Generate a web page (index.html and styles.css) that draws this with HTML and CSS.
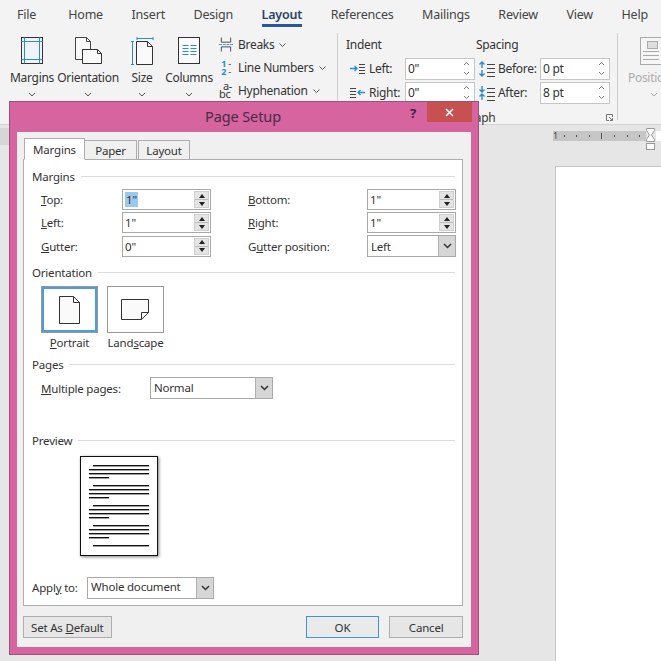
FILE: index.html

```html
<!DOCTYPE html>
<html lang="en">
<head>
    <meta charset="UTF-8">
    <title>Page Setup</title>
    <link rel="stylesheet" href="styles.css">
</head>
<body>
    <div class="tabs">
        <span class="tab-file">File</span>
        <span>Home</span>
        <span>Insert</span>
        <span>Design</span>
        <span class="tab-on">Layout</span>
        <span>References</span>
        <span>Mailings</span>
        <span>Review</span>
        <span>View</span>
        <span>Help</span>
    </div>

    <div class="ribbon">
        <div class="group-setup">
            <div class="big big-margins">
                <svg width="24" height="29" viewBox="0 0 24 29"><rect x="1.5" y="1.5" width="21" height="26" fill="#eef4fa" stroke="#333"/><path d="M4.5 1.5v26M19.5 1.5v26M1.5 5.5h21M1.5 23.5h21" stroke="#2e8bc9" fill="none"/></svg>
                <span>Margins</span>
                <svg class="chev" width="8" height="5" viewBox="0 0 8 5"><path d="M1 1l3 3 3-3" fill="none" stroke="#555"/></svg>
            </div>
            <div class="big big-orient">
                <svg width="30" height="29" viewBox="0 0 30 29"><path d="M2.5 1.5h11l4 4v8h-8v10h-7z" fill="#fafafa" stroke="#444"/><path d="M13.5 1.5v4h4" fill="none" stroke="#444"/><path d="M9.5 13.5h15l4 4v10h-19z" fill="#fafafa" stroke="#333"/><path d="M24.5 13.5v4h4" fill="none" stroke="#333"/></svg>
                <span>Orientation</span>
                <svg class="chev" width="8" height="5" viewBox="0 0 8 5"><path d="M1 1l3 3 3-3" fill="none" stroke="#555"/></svg>
            </div>
            <div class="big big-size">
                <svg width="24" height="29" viewBox="0 0 24 29"><path d="M6.5 5.5h11l5 5v18h-16z" fill="#fafafa" stroke="#333"/><path d="M17.5 5.5v5h5" fill="none" stroke="#333"/><path d="M7 2.500h16M7 1v3M23 1v3M2.500 5v24M1 5.500h3M1 28.500h3" fill="none" stroke="#2e8bc9"/></svg>
                <span>Size</span>
                <svg class="chev" width="8" height="5" viewBox="0 0 8 5"><path d="M1 1l3 3 3-3" fill="none" stroke="#555"/></svg>
            </div>
            <div class="big big-cols">
                <svg width="23" height="29" viewBox="0 0 23 29"><rect x="0.500" y="1.500" width="21" height="26" fill="#fafafa" stroke="#333"/><path d="M4.500 9.500h6M12.500 9.500h6M4.500 12.500h6M12.500 12.500h6M4.500 15.500h6M12.500 15.500h6M4.500 18.500h6M12.500 18.500h6" stroke="#2e8bc9" fill="none"/></svg>
                <span>Columns</span>
                <svg class="chev" width="8" height="5" viewBox="0 0 8 5"><path d="M1 1l3 3 3-3" fill="none" stroke="#555"/></svg>
            </div>
            <div class="small-list">
                <div class="small">
                    <svg width="15" height="16" viewBox="0 0 15 16"><path d="M2.500 0v5h10V0M2.500 15v-5h10v5" fill="none" stroke="#444"/><path d="M0 7.500h15" stroke="#2e8bc9" stroke-dasharray="3 1"/></svg>
                    <span>Breaks</span>
                    <svg width="7" height="4" viewBox="0 0 7 4"><path d="M.5.500l3 3 3-3" fill="none" stroke="#555"/></svg>
                </div>
                <div class="small">
                    <span class="line-nums"><b>1</b> -<br><b>2</b> -</span>
                    <span>Line Numbers</span>
                    <svg width="7" height="4" viewBox="0 0 7 4"><path d="M.5.500l3 3 3-3" fill="none" stroke="#555"/></svg>
                </div>
                <div class="small">
                    <span class="hyph">a-<br>bc</span>
                    <span>Hyphenation</span>
                    <svg width="7" height="4" viewBox="0 0 7 4"><path d="M.5.500l3 3 3-3" fill="none" stroke="#555"/></svg>
                </div>
            </div>
        </div>

        <div class="group-para">
            <div class="para-col para-indent">
                <div class="para-head">Indent</div>
                <div class="para-row">
                    <svg width="15" height="12" viewBox="0 0 15 12"><path d="M9 1.500h6M9 4.500h6M9 7.500h6M9 10.500h6" stroke="#444" fill="none"/><path d="M0 5.500h7M4.500 3l2.500 2.500-2.500 2.500" stroke="#2e8bc9" stroke-width="1.400" fill="none"/></svg>
                    <span class="para-label">Left:</span>
                    <div class="r-input">0"<span class="r-spin"><svg width="7" height="15" viewBox="0 0 7 15"><path d="M1 4l2.500-2.500L6 4M1 11l2.500 2.500L6 11" fill="none" stroke="#777"/></svg></span></div>
                </div>
                <div class="para-row">
                    <svg width="15" height="12" viewBox="0 0 15 12"><path d="M0 1.500h6M0 4.500h6M0 7.500h6M0 10.500h6" stroke="#444" fill="none"/><path d="M15 5.500H8M10.500 3L8 5.500 10.500 8" stroke="#2e8bc9" stroke-width="1.400" fill="none"/></svg>
                    <span class="para-label">Right:</span>
                    <div class="r-input">0"<span class="r-spin"><svg width="7" height="15" viewBox="0 0 7 15"><path d="M1 4l2.500-2.500L6 4M1 11l2.500 2.500L6 11" fill="none" stroke="#777"/></svg></span></div>
                </div>
            </div>
            <div class="para-col">
                <div class="para-head">Spacing</div>
                <div class="para-row para-row-sp">
                    <svg width="17" height="16" viewBox="0 0 17 16"><path d="M4 1v6M1.500 3.500L4 1l2.500 2.500M4 9v6M1.500 12.500L4 15l2.500-2.500" stroke="#2e8bc9" stroke-width="1.400" fill="none"/><path d="M9 3.500h8M9 7.500h8M9 11.500h8M9 15.500h8" stroke="#444" fill="none"/></svg>
                    <span class="para-label">Before:</span>
                    <div class="r-input">0 pt<span class="r-spin"><svg width="7" height="15" viewBox="0 0 7 15"><path d="M1 4l2.500-2.500L6 4M1 11l2.500 2.500L6 11" fill="none" stroke="#777"/></svg></span></div>
                </div>
                <div class="para-row para-row-sp">
                    <svg width="17" height="16" viewBox="0 0 17 16"><path d="M4 1v6M1.500 4.500L4 7l2.500-2.500M4 9v6M1.500 11.500L4 9l2.500 2.500" stroke="#2e8bc9" stroke-width="1.400" fill="none"/><path d="M9 3.500h8M9 7.500h8M9 11.500h8M9 15.500h8" stroke="#444" fill="none"/></svg>
                    <span class="para-label">After:</span>
                    <div class="r-input">8 pt<span class="r-spin"><svg width="7" height="15" viewBox="0 0 7 15"><path d="M1 4l2.500-2.500L6 4M1 11l2.500 2.500L6 11" fill="none" stroke="#777"/></svg></span></div>
                </div>
            </div>
            <div class="para-foot">
                <span>Paragraph</span>
                <svg width="7" height="7" viewBox="0 0 7 7"><path d="M6.500 3V.500H.500v6H3M3 3l3.500 3.500M6.500 4v2.500H4" fill="none" stroke="#777"/></svg>
            </div>
        </div>

        <div class="group-arrange">
            <svg width="22" height="28" viewBox="0 0 22 28"><rect x="0.500" y="0.500" width="21" height="27" fill="#f6f6f6" stroke="#aaa"/><rect x="7.500" y="4.500" width="10" height="7" fill="#ddd" stroke="#aaa"/><path d="M3 14.500h16M3 18.500h16M3 22.500h16" stroke="#aaa"/></svg>
            <span>Position</span>
            <svg class="chev" width="8" height="5" viewBox="0 0 8 5"><path d="M1 1l3 3 3-3" fill="none" stroke="#aaa"/></svg>
        </div>
    </div>

    <div class="workspace">
        <div class="ruler">
            <span class="ruler-side"></span>
            <span class="ruler-one">1</span>
            <span class="ruler-ticks">
                <i></i><i></i><i></i><b></b><i></i><i></i><i></i>
            </span>
            <svg class="ruler-mark" width="10" height="22" viewBox="0 0 10 22"><path d="M.500.500h8v2L5.500 7l3 4.500v2h-8v-2l3-4.500-3-4.500z" fill="#fff" stroke="#999"/><rect x=".5" y="15.500" width="8" height="6" fill="#fff" stroke="#999"/></svg>
            <span class="ruler-rest"></span>
        </div>
        <div class="doc-page"></div>
    </div>

    <div class="dialog">
        <div class="title-bar">
            <span class="title">Page Setup</span>
            <span class="help">?</span>
            <span class="close"><svg width="9" height="9" viewBox="0 0 9 9"><path d="M1 1l7 7M8 1L1 8" stroke="#fff" stroke-width="1.600" fill="none"/></svg></span>
        </div>
        <div class="client">
            <div class="dlg-tabs">
                <span class="dlg-tab dlg-tab-on">Margins</span>
                <span class="dlg-tab dlg-tab-paper">Paper</span>
                <span class="dlg-tab dlg-tab-layout">Layout</span>
            </div>
            <div class="panel">
                <div class="section section-first"><span>Margins</span></div>
                <div class="margin-grid">
                    <label><u>T</u>op:</label>
                    <div class="num"><span class="selected">1"</span><span class="spin"><i class="up"></i><i class="down"></i></span></div>
                    <label class="col2"><u>B</u>ottom:</label>
                    <div class="num">1"<span class="spin"><i class="up"></i><i class="down"></i></span></div>

                    <label><u>L</u>eft:</label>
                    <div class="num">1"<span class="spin"><i class="up"></i><i class="down"></i></span></div>
                    <label class="col2"><u>R</u>ight:</label>
                    <div class="num">1"<span class="spin"><i class="up"></i><i class="down"></i></span></div>

                    <label><u>G</u>utter:</label>
                    <div class="num">0"<span class="spin"><i class="up"></i><i class="down"></i></span></div>
                    <label class="col2">G<u>u</u>tter position:</label>
                    <div class="combo combo-gutter"><span class="combo-text">Left</span><span class="combo-btn"><svg width="9" height="6" viewBox="0 0 9 6"><path d="M1 1l3.500 3.500L8 1" fill="none" stroke="#333" stroke-width="1.500"/></svg></span></div>
                </div>

                <div class="section section-orient"><span>Orientation</span></div>
                <div class="orient-row">
                    <div class="orient">
                        <div class="orient-box orient-box-on">
                            <svg width="22" height="28" viewBox="0 0 22 28"><path d="M.500.500h14l6 6v21H.500z" fill="#fafafa" stroke="#333"/><path d="M14.500.500v6h6" fill="none" stroke="#333"/></svg>
                        </div>
                        <span><u>P</u>ortrait</span>
                    </div>
                    <div class="orient">
                        <div class="orient-box">
                            <svg width="29" height="21" viewBox="0 0 29 21"><path d="M.500.500h27v13l-7 7H.500z" fill="#fafafa" stroke="#333"/><path d="M27.500 13.500h-7v7" fill="none" stroke="#333"/></svg>
                        </div>
                        <span>Land<u>s</u>cape</span>
                    </div>
                </div>

                <div class="section section-pages"><span>Pages</span></div>
                <div class="pages-row">
                    <label class="pages-label"><u>M</u>ultiple pages:</label>
                    <div class="combo combo-pages"><span class="combo-text">Normal</span><span class="combo-btn"><svg width="9" height="6" viewBox="0 0 9 6"><path d="M1 1l3.500 3.500L8 1" fill="none" stroke="#333" stroke-width="1.500"/></svg></span></div>
                </div>

                <div class="section section-preview"><span>Preview</span></div>
                <div class="preview">
                    <svg width="78" height="100" viewBox="0 0 78 100">
                        <g fill="#111">
                            <rect x="13" y="9" width="56" height="1.400"/><rect x="9" y="13" width="60" height="1.400"/><rect x="9" y="17" width="60" height="1.400"/><rect x="9" y="21" width="20" height="1.400"/>
                            <rect x="13" y="29" width="56" height="1.400"/><rect x="9" y="33" width="60" height="1.400"/><rect x="9" y="37" width="60" height="1.400"/><rect x="9" y="41" width="20" height="1.400"/>
                            <rect x="13" y="49" width="56" height="1.400"/><rect x="9" y="53" width="60" height="1.400"/><rect x="9" y="57" width="60" height="1.400"/><rect x="9" y="61" width="20" height="1.400"/>
                            <rect x="13" y="69" width="56" height="1.400"/><rect x="9" y="73" width="60" height="1.400"/><rect x="9" y="77" width="60" height="1.400"/><rect x="9" y="81" width="20" height="1.400"/>
                            <rect x="13" y="89" width="56" height="1.400"/>
                        </g>
                    </svg>
                </div>
                <div class="apply-row">
                    <label class="apply-label">Appl<u>y</u> to:</label>
                    <div class="combo combo-apply"><span class="combo-text">Whole document</span><span class="combo-btn"><svg width="9" height="6" viewBox="0 0 9 6"><path d="M1 1l3.500 3.500L8 1" fill="none" stroke="#333" stroke-width="1.500"/></svg></span></div>
                </div>
            </div>
            <div class="buttons">
                <button class="btn btn-default" type="button">Set As <u>D</u>efault</button>
                <button class="btn btn-ok" type="button">OK</button>
                <button class="btn btn-cancel" type="button">Cancel</button>
            </div>
        </div>
    </div>
</body>
</html>
```

FILE: styles.css

```css
html, body {
    margin: 0;
    padding: 0;
}
body {
    width: 661px;
    height: 661px;
    overflow: hidden;
    position: relative;
    background: #e6e6e6;
    font-family: "Noto Sans", sans-serif;
    font-size: 12px;
    letter-spacing: -0.3px;
    color: #333;
}

/* word ribbon behind the dialog */
.tabs {
    display: flex;
    height: 30px;
    padding-left: 17px;
    gap: 28.5px;
    background: #f3f3f3;
    font-size: 12.5px;
    letter-spacing: -0.2px;
    line-height: 29px;
    color: #444;
    white-space: nowrap;
}
.tab-file {
    margin-right: 3.500px;
}
.tab-on {
    font-weight: 600;
    color: #2d4468;
    height: 27px;
    border-bottom: 3px solid #2b579a;
    box-sizing: border-box;
}
.ribbon {
    display: flex;
    height: 95px;
    background: #f3f3f3;
    border-bottom: 1px solid #d2d2d2;
    box-sizing: border-box;
}
.group-setup {
    display: flex;
    flex-shrink: 0;
    width: 337px;
    padding-left: 10px;
    box-sizing: border-box;
}
.big {
    display: flex;
    flex-direction: column;
    align-items: center;
    padding-top: 6px;
    box-sizing: border-box;
    white-space: nowrap;
}
.big > svg:first-child {
    height: 29px;
}
.big span {
    margin-top: 4px;
    line-height: 18px;
}
.big .chev {
    margin-top: 5px;
}
.big-margins { width: 44px; margin-right: 4px; }
.big-orient { width: 60px; }
.big-size { width: 48px; }
.big-cols { width: 46px; margin-right: 7px; }
.small-list {
    display: flex;
    flex-direction: column;
    padding-top: 3px;
}
.small {
    display: flex;
    align-items: center;
    height: 23px;
    gap: 5px;
    white-space: nowrap;
}
.small > :first-child {
    width: 14px;
    flex-shrink: 0;
}
.line-nums {
    font-size: 9px;
    line-height: 8px;
    text-align: center;
}
.line-nums b {
    color: #2e8bc9;
}
.hyph {
    font-size: 11px;
    line-height: 8px;
    text-indent: 4px;
    margin-top: -2px;
}
.group-para {
    position: relative;
    display: flex;
    flex-shrink: 0;
    width: 271px;
    height: 87px;
    margin-top: 3px;
    border-left: 1px solid #cfcfcf;
    border-right: 1px solid #cfcfcf;
    padding-left: 8px;
}
.para-col {
    display: flex;
    flex-direction: column;
}
.para-indent {
    width: 130px;
}
.para-head {
    height: 24px;
    line-height: 24px;
}
.para-row {
    display: flex;
    align-items: center;
    height: 23px;
    margin-bottom: 1px;
    padding-left: 4px;
}
.para-row-sp {
    padding-left: 2px;
}
.para-label {
    width: 36px;
    margin-left: 4px;
}
.para-row-sp .para-label {
    width: 42px;
    margin-left: 3px;
}
.r-input {
    display: flex;
    align-items: center;
    justify-content: space-between;
    width: 70px;
    height: 22px;
    padding: 0 4px 0 2px;
    background: #fff;
    border: 1px solid #c6c6c6;
    box-sizing: border-box;
}
.r-spin {
    display: flex;
}
.para-foot {
    position: absolute;
    left: 8px;
    right: 4px;
    bottom: -4px;
    display: flex;
    justify-content: space-between;
    align-items: center;
    padding-left: 93px;
    height: 14px;
}
.group-arrange {
    display: flex;
    flex-direction: column;
    align-items: flex-start;
    padding: 7px 0 0 10px;
    color: #ababab;
    white-space: nowrap;
}
.group-arrange svg:first-child {
    margin-left: 12px;
}
.group-arrange span {
    line-height: 18px;
    margin-top: 4px;
}
.group-arrange .chev {
    margin: 5px 0 0 22px;
}

.workspace {
    height: 536px;
}
.ruler {
    display: flex;
    height: 23px;
    padding-top: 3px;
    box-sizing: border-box;
}
.ruler-side {
    width: 9px;
    height: 17px;
    margin-right: 544px;
    background: #d6d6d6;
}
.ruler-one {
    width: 5px;
    height: 10px;
    margin-top: 3px;
    font-size: 9px;
    line-height: 10px;
    background: #c6c6c6;
    color: #444;
}
.ruler-ticks {
    display: flex;
    justify-content: space-around;
    align-items: center;
    width: 88px;
    height: 10px;
    margin-top: 3px;
    background: #c6c6c6;
}
.ruler-ticks i {
    width: 1px;
    height: 2px;
    background: #555;
}
.ruler-ticks b {
    width: 1px;
    height: 6px;
    background: #555;
}
.ruler-rest {
    flex: 1;
    height: 10px;
    margin-top: 3px;
    background: #fff;
}
.doc-page {
    height: 494px;
    margin: 18px 0 0 555px;
    background: #fff;
    border-left: 1px solid #c6c6c6;
    border-top: 1px solid #c6c6c6;
}

/* page setup dialog */
.dialog {
    position: absolute;
    left: 9px;
    top: 101px;
    width: 470px;
    height: 554px;
    background: #d5649f;
    border: 1px solid #a04f7c;
    box-sizing: border-box;
    padding: 0 7px 7px 7px;
    display: flex;
    flex-direction: column;
}
.title-bar {
    position: relative;
    height: 30px;
    flex-shrink: 0;
    text-align: center;
}
.title {
    font-size: 14.5px;
    letter-spacing: -0.1px;
    line-height: 29px;
    color: #4a2b48;
    margin-left: -2px;
}
.help {
    position: absolute;
    left: 393px;
    top: 3px;
    font-size: 13px;
    line-height: 16px;
    font-weight: 700;
    color: #3a2347;
}
.close {
    position: absolute;
    left: 410px;
    top: 0;
    width: 45px;
    height: 20px;
    background: #c75050;
    display: flex;
    align-items: center;
    justify-content: center;
}
.client {
    flex: 1;
    background: #f0f0f0;
    padding: 0 8px 0 6px;
    display: flex;
    flex-direction: column;
    font-size: 11.5px;
    letter-spacing: -0.2px;
}
.dlg-tabs {
    display: flex;
    height: 28px;
    padding-top: 6px;
    box-sizing: border-box;
    align-items: flex-end;
    position: relative;
    z-index: 1;
    margin-bottom: -1px;
}
.dlg-tab {
    height: 20px;
    line-height: 20px;
    text-align: center;
    background: #f0f0f0;
    border: 1px solid #adadad;
    box-sizing: border-box;
}
.dlg-tab-on {
    width: 61px;
    height: 22px;
    margin-left: 1px;
    background: #fff;
    border-bottom: 1px solid #fff;
    line-height: 22px;
}
.dlg-tab-paper {
    width: 52px;
    border-left: 0;
}
.dlg-tab-layout {
    width: 52px;
    margin-left: 1px;
}
.panel {
    height: 447px;
    flex-shrink: 0;
    background: #fff;
    border: 1px solid #adadad;
    box-sizing: border-box;
    padding: 0 7px 0 8px;
}
.section {
    display: flex;
    align-items: center;
    height: 16px;
    gap: 6px;
}
.section::after {
    content: "";
    flex: 1;
    height: 1px;
    background: #dcdcdc;
}
.section-first { margin-top: 8px; }
.section-orient { margin-top: 7px; }
.section-pages { margin-top: 5px; padding-bottom: 1px; }
.section-preview { margin-top: 33px; padding-bottom: 1px; }

.margin-grid {
    display: grid;
    grid-template-columns: 81px 89px 156px 89px;
    row-gap: 2px;
    margin: 5px 0 0 9px;
    align-items: center;
}
.col2 {
    padding-left: 37px;
}
.num, .combo {
    position: relative;
    display: flex;
    align-items: center;
    height: 21px;
    padding-left: 2px;
    border: 1px solid #a9a9a9;
    box-sizing: border-box;
    background: #fff;
}
.selected {
    background: #99c9ef;
    padding: 0 1px;
}
.spin {
    position: absolute;
    right: 1px;
    top: 1px;
    width: 15px;
    height: 17px;
    display: flex;
    flex-direction: column;
    background: #e4e4e4;
    border: 1px solid #d0d0d0;
    box-sizing: border-box;
}
.spin i {
    flex: 1;
    display: flex;
    align-items: center;
    justify-content: center;
}
.spin .up {
    border-bottom: 1px solid #bbb;
}
.spin .up::before, .spin .down::before {
    content: "";
    width: 0;
    height: 0;
    border-left: 3.500px solid transparent;
    border-right: 3.500px solid transparent;
}
.spin .up::before {
    border-bottom: 4px solid #222;
}
.spin .down::before {
    border-top: 4px solid #222;
}
.combo {
    height: 22px;
    padding-left: 3px;
    justify-content: space-between;
    line-height: 18px;
}
.combo-gutter .combo-text {
    margin-top: 2px;
}
.combo-apply .combo-text {
    margin-top: -2px;
}
.combo-btn {
    display: flex;
    align-items: center;
    justify-content: center;
    width: 16px;
    height: 100%;
    background: #d6d6d6;
    border-left: 1px solid #b0b0b0;
}
.orient-row {
    display: flex;
    gap: 9px;
    margin: 6px 0 0 9px;
}
.orient {
    display: flex;
    flex-direction: column;
    align-items: center;
    width: 57px;
    white-space: nowrap;
}
.orient span {
    margin-top: 2px;
    line-height: 16px;
}
.orient-box {
    display: flex;
    align-items: center;
    justify-content: center;
    width: 57px;
    height: 47px;
    border: 1px solid #999;
    box-sizing: border-box;
}
.orient-box-on {
    outline: 2px solid #4d9ddb;
    outline-offset: -3px;
}
.pages-row {
    display: flex;
    align-items: center;
    margin: 4px 0 0 9px;
}
.pages-label {
    width: 109px;
}
.combo-pages {
    width: 123px;
}
.preview {
    width: 78px;
    height: 100px;
    margin: 7px 0 0 48px;
    background: #fff;
    border: 1px solid #111;
    box-sizing: border-box;
    box-shadow: 1px 1px 3px rgba(0, 0, 0, 0.5);
}
.preview svg {
    display: block;
    margin: -1px;
}
.apply-row {
    display: flex;
    align-items: center;
    margin-top: 21px;
}
.apply-label {
    width: 55px;
    margin-top: -2px;
}
.combo-apply {
    width: 127px;
}
.buttons {
    display: flex;
    margin-top: 10px;
}
.btn {
    height: 22px;
    padding: 0;
    font-family: inherit;
    font-size: 11.5px;
    letter-spacing: inherit;
    color: #333;
    background: #e6e6e6;
    border: 1px solid #adadad;
    box-sizing: border-box;
}
.btn-default {
    width: 89px;
    margin-right: 194px;
}
.btn-ok {
    width: 74px;
    margin-right: 10px;
    border-color: #3f94d6;
    background: #eaeaea;
}
.btn-cancel {
    width: 74px;
}
```
